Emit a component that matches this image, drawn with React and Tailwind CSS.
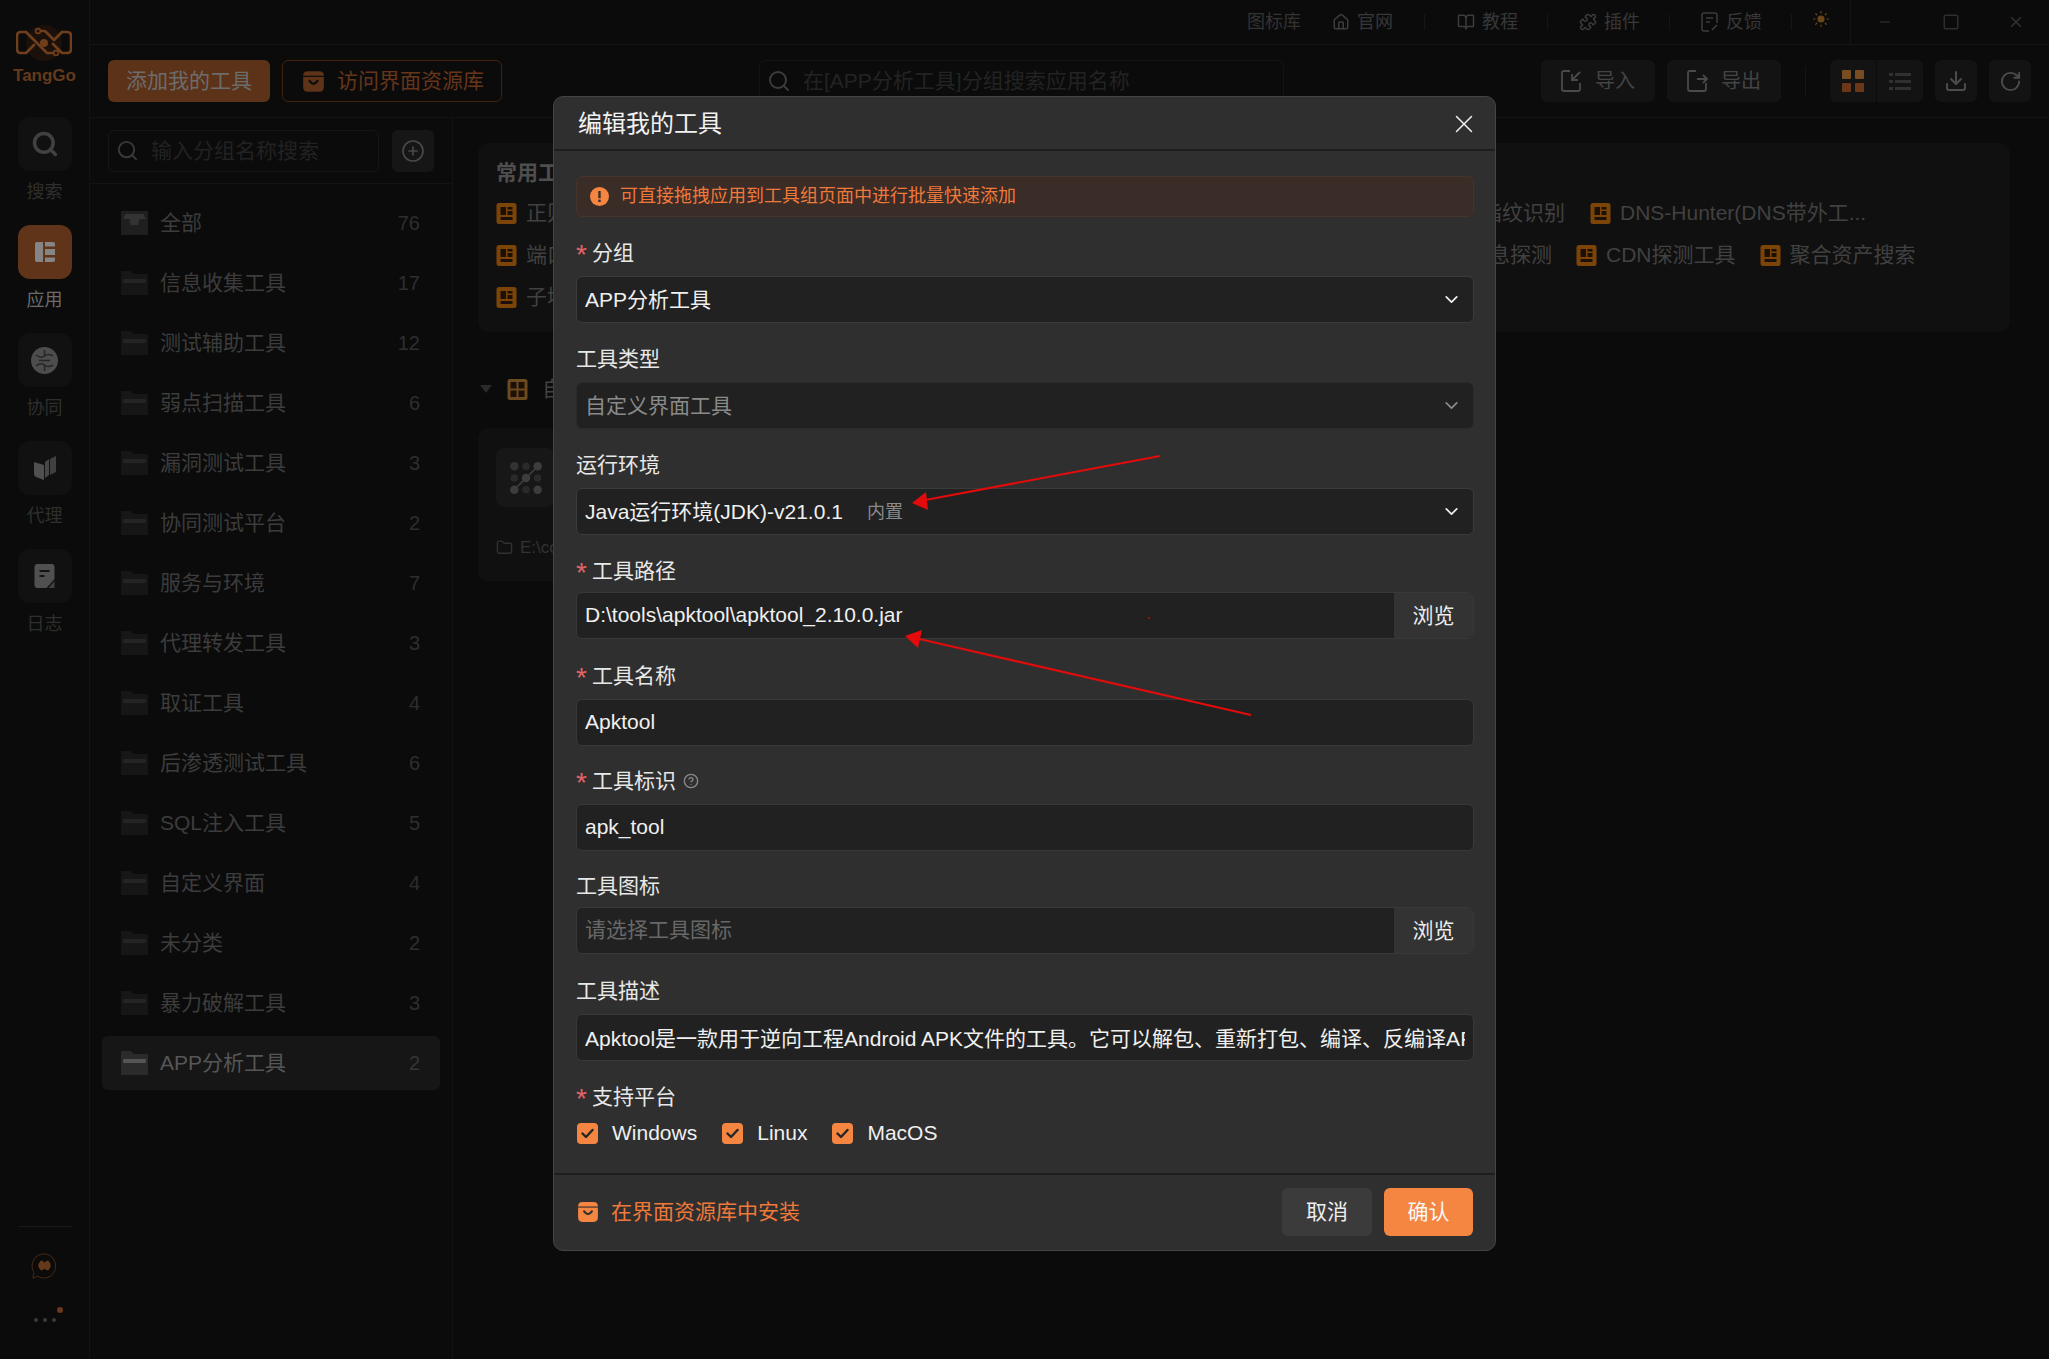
import React from "react";
import { Search, CirclePlus, House, BookOpen, Puzzle, Sun, Download, RotateCw, Folder, ChevronDown, CircleHelp, X, Minus, Square } from "lucide-react";

const FONT = { fontFamily: '"Liberation Sans","Noto Sans CJK SC",sans-serif' };

function Logo() {
  return (
    <svg width="56" height="38" viewBox="0 0 56 38" fill="none">
      <circle cx="28" cy="19" r="18" fill="#1c110a" />
      <g stroke="#6f3e1d" strokeWidth="2.6" strokeLinecap="round" strokeLinejoin="round">
        <path d="M10 8 H5 Q1 8 1 12 V25 Q1 29 5 29 H10 L18 21" />
        <path d="M46 8 H51 Q55 8 55 12 V25 Q55 29 51 29 H46 L37 20" />
        <path d="M10 8 L31 29 H37" />
        <path d="M46 8 L38 16" />
        <path d="M25 7 H29 L37 15" />
      </g>
      <circle cx="28" cy="19" r="4" fill="#6f3e1d" />
      <circle cx="22" cy="7" r="2.4" stroke="#6f3e1d" strokeWidth="1.6" />
      <circle cx="40" cy="29" r="2.4" stroke="#6f3e1d" strokeWidth="1.6" />
    </svg>
  );
}

function RailIcon({ kind }) {
  if (kind === "search") return <Search size={28} color="#414141" strokeWidth={3} />;
  if (kind === "app")
    return (
      <svg width="22" height="22" viewBox="0 0 22 22" fill="#858585">
        <path d="M3 1 H9 V21 H3 Q1 21 1 19 V3 Q1 1 3 1 Z" />
        <path d="M11 1 H19 Q21 1 21 3 V5.5 H11 Z M11 8 H21 V14 H11 Z M11 16.5 H21 V19 Q21 21 19 21 H11 Z" />
      </svg>
    );
  if (kind === "collab")
    return (
      <svg width="27" height="27" viewBox="0 0 27 27" fill="none">
        <circle cx="13.5" cy="13.5" r="13.5" fill="#4d4d4d" />
        <path d="M13.5 3 V10 M13.5 17 V24 M5 8 Q10 12 13.5 9 Q17 6 22 9 M5 19 Q10 15 13.5 18 Q17 21 22 18 M8 13.5 H19" stroke="#262626" strokeWidth="1.5" />
      </svg>
    );
  if (kind === "proxy")
    return (
      <svg width="22" height="24" viewBox="0 0 22 24" fill="#505050">
        <path d="M0 6 L10 9 V24 L2 21 Q0 20 0 18 Z" />
        <path d="M11 6 L15 3 V19 L11 22 Z" fill="#484848" />
        <path d="M16 3 L22 0 V16 L16 19 Z" fill="#404040" />
      </svg>
    );
  return (
    <svg width="21" height="24" viewBox="0 0 20 24">
      <path d="M3 0 H17 Q20 0 20 3 V15 L12 24 H3 Q0 24 0 21 V3 Q0 0 3 0 Z" fill="#505050" />
      <path d="M5 6 H15 V8 H5 Z M5 11 H10 V13 H5 Z" fill="#141414" />
      <path d="M20 17 V24 H14 Z" fill="#404040" />
    </svg>
  );
}

function RailItem({ kind, label, active }) {
  return (
    <div className="flex flex-col items-center mb-[21px]">
      <div className={`w-[54px] h-[54px] rounded-[12px] flex items-center justify-center ${active ? "bg-[#5f3418]" : "bg-[#111111]"}`}>
        <RailIcon kind={kind} />
      </div>
      <div className={`mt-[9px] h-[24px] leading-[24px] text-[18px] ${active ? "text-[#6b6b6b]" : "text-[#2f2f2f]"}`}>{label}</div>
    </div>
  );
}

function Rail() {
  return (
    <div className="w-[90px] shrink-0 h-full border-r border-[#131313] bg-[#0b0b0b] flex flex-col items-center">
      <div className="h-[117px] shrink-0 pt-[24px] flex flex-col items-center">
        <Logo />
        <div className="text-[17px] leading-[24px] mt-[2px] font-bold text-[#653a1c]">TangGo</div>
      </div>
      <RailItem kind="search" label="搜索" />
      <RailItem kind="app" label="应用" active />
      <RailItem kind="collab" label="协同" />
      <RailItem kind="proxy" label="代理" />
      <RailItem kind="log" label="日志" />
      <div className="mt-auto h-[133px] shrink-0 w-[54px] border-t border-[#181818] flex flex-col items-center pt-[26px]">
        <svg width="27" height="27" viewBox="0 0 26 28" fill="none">
          <path d="M13 1 A12 12.5 0 1 1 6 24 L1 26 L2 20 A12 12.5 0 0 1 13 1 Z" stroke="#4d2a14" strokeWidth="1" />
          <path d="M7 11 L9 8 H11 L13 10 L15 8 H17 L19 11 Q20 13 19 15 L17 18 H15 L13 16 L11 18 H9 L7 15 Q6 13 7 11 Z" fill="#653a1a" />
        </svg>
        <div className="relative mt-[38px] flex gap-[5px]">
          <span className="w-[4px] h-[4px] rounded-full bg-[#3a3a3a]" />
          <span className="w-[4px] h-[4px] rounded-full bg-[#3a3a3a]" />
          <span className="w-[4px] h-[4px] rounded-full bg-[#3a3a3a]" />
          <span className="absolute -top-[11px] -right-[7px] w-[6px] h-[6px] rounded-full bg-[#6a3a1c]" />
        </div>
      </div>
    </div>
  );
}

function NavDivider({ className }) {
  return <span className={`w-px h-[16px] bg-[#161616] ${className || "ml-[29px]"}`} />;
}

function NavItem({ icon, text, className }) {
  return (
    <div className={`flex items-center gap-[7px] ${className || "ml-[31px]"}`}>
      {icon}
      <span className="text-[18px] text-[#383838]">{text}</span>
    </div>
  );
}

function TopBar() {
  const c = "#3c3c3c";
  return (
    <div className="h-[45px] shrink-0 border-b border-[#141414] flex items-center justify-end">
      <span className="text-[18px] text-[#333333]">图标库</span>
      <NavItem icon={<House size={18} color={c} />} text="官网" />
      <NavDivider className="ml-[31px]" />
      <NavItem icon={<BookOpen size={18} color={c} />} text="教程" className="ml-[32px]" />
      <NavDivider />
      <NavItem icon={<Puzzle size={18} color={c} />} text="插件" />
      <NavDivider />
      <NavItem
        icon={
          <svg width="18" height="20" viewBox="0 0 18 20" fill="none" stroke={c} strokeWidth="1.5">
            <path d="M8 19 H3 Q1 19 1 17 V3 Q1 1 3 1 H14 Q16 1 16 3 V11 M5 6 H12 M5 10 H9 M16 13 L11 18" />
          </svg>
        }
        text="反馈"
      />
      <NavDivider />
      <div className="ml-[20px] w-[18px] h-[28px] pb-[6px] flex items-center justify-center">
        <Sun size={22} color="#6b461b" fill="#6b461b" strokeWidth={1.6} />
      </div>
      <div className="ml-[20px] h-full w-[199px] border-l border-[#141414] flex items-center pl-[26px]">
        <Minus size={16} color="#2a2a2a" />
        <Square size={18} color="#2e2e2e" strokeWidth={2} className="ml-[49px]" />
        <X size={18} color="#303030" className="ml-[47px]" />
      </div>
    </div>
  );
}

function BagIcon({ size, color, smile }) {
  return (
    <svg width={size} height={size} viewBox="0 0 20 20">
      <path d="M5 1 H15 Q19 1 19 5 V15 Q19 19 15 19 H5 Q1 19 1 15 V5 Q1 1 5 1 Z" fill={color} />
      <path d="M1 5.5 H19" stroke={smile} strokeWidth="1" />
      <path d="M6.5 9.5 Q10 14.5 13.5 9.5" stroke={smile} strokeWidth="2" fill="none" strokeLinecap="round" />
    </svg>
  );
}

function GhostBtn({ icon, text }) {
  return (
    <div className="w-[114px] h-[42px] rounded-[6px] bg-[#131313] flex items-center justify-center gap-[12px] text-[20px] text-[#444444]">
      {icon}
      <span>{text}</span>
    </div>
  );
}

function Toolbar() {
  const c = "#4a4a4a";
  return (
    <div className="h-[73px] shrink-0 border-b border-[#131313] flex items-center pl-[18px] pr-[18px]">
      <div className="w-[162px] h-[42px] rounded-[6px] bg-[#5c3318] text-[#6c6c6c] text-[21px] flex items-center justify-center">添加我的工具</div>
      <div className="ml-[12px] w-[220px] h-[42px] rounded-[6px] border border-[#40220f] text-[#66351a] text-[21px] flex items-center pl-[19px] gap-[12px]">
        <BagIcon size={23} color="#5e3317" smile="#0b0b0b" />
        <span>访问界面资源库</span>
      </div>
      <div className="ml-[257px] w-[525px] h-[42px] rounded-[6px] border border-[#141414] flex items-center pl-[7px] gap-[12px]">
        <Search size={24} color="#3c3c3c" strokeWidth={2} />
        <span className="text-[21px] text-[#232323]">在[APP分析工具]分组搜索应用名称</span>
      </div>
      <div className="ml-auto flex items-center">
        <GhostBtn
          text="导入"
          icon={
            <svg width="22" height="22" viewBox="0 0 22 22" fill="none" stroke={c} strokeWidth="1.8">
              <path d="M9 1 H3 Q1 1 1 3 V19 Q1 21 3 21 H17 Q19 21 19 19 V13 M19 2 L11 10 M11 4 V10 H17" />
            </svg>
          }
        />
        <div className="ml-[12px]">
          <GhostBtn
            text="导出"
            icon={
              <svg width="22" height="22" viewBox="0 0 22 22" fill="none" stroke={c} strokeWidth="1.8">
                <path d="M9 1 H3 Q1 1 1 3 V19 Q1 21 3 21 H17 Q19 21 19 19 V13 M10 9 H20 M16 5 L20 9 L16 13" />
              </svg>
            }
          />
        </div>
        <span className="ml-[24px] w-px h-[30px] bg-[#161616]" />
        <div className="ml-[24px] w-[93px] h-[42px] rounded-[6px] bg-[#131313] flex">
          <div className="w-[47px] h-full border-r border-[#0b0b0b] flex items-center justify-center">
            <div className="grid grid-cols-2 gap-[4px]">
              <span className="w-[9px] h-[9px] rounded-[1px] bg-[#7a4c22]" />
              <span className="w-[9px] h-[9px] rounded-[1px] bg-[#7a4c22]" />
              <span className="w-[9px] h-[9px] rounded-[1px] bg-[#6a3719]" />
              <span className="w-[9px] h-[9px] rounded-[1px] bg-[#6a3719]" />
            </div>
          </div>
          <div className="flex-1 flex flex-col items-center justify-center gap-[4px]">
            <span className="flex gap-[2px]"><i className="w-[4px] h-[3px] bg-[#303030]" /><i className="w-[16px] h-[3px] bg-[#303030]" /></span>
            <span className="flex gap-[2px]"><i className="w-[4px] h-[3px] bg-[#303030]" /><i className="w-[16px] h-[3px] bg-[#303030]" /></span>
            <span className="flex gap-[2px]"><i className="w-[4px] h-[3px] bg-[#303030]" /><i className="w-[16px] h-[3px] bg-[#303030]" /></span>
          </div>
        </div>
        <div className="ml-[12px] w-[42px] h-[42px] rounded-[6px] bg-[#131313] flex items-center justify-center"><Download size={24} color="#4c4c4c" /></div>
        <div className="ml-[12px] w-[42px] h-[42px] rounded-[6px] bg-[#131313] flex items-center justify-center"><RotateCw size={23} color="#4c4c4c" /></div>
      </div>
    </div>
  );
}

function FolderIcon({ active, inbox }) {
  const body = active ? "#2b2b2b" : "#161616";
  const stripe = active ? "#555555" : "#242424";
  return (
    <svg width="27" height="24" viewBox="0 0 25 24" preserveAspectRatio="none" className="shrink-0">
      {inbox ? (
        <>
          <rect x="0" y="0" width="25" height="24" rx="1" fill="#1f1f1f" />
          <path d="M2 8 H8 L9 14 H16 L17 8 H23 L21 3 H4 Z" fill="#333333" />
        </>
      ) : (
        <>
          <path d="M0 1 Q0 0 1 0 H9 L12 3 H24 Q25 3 25 4 V23 Q25 24 24 24 H1 Q0 24 0 23 Z" fill={body} />
          <rect x="2" y="8" width="21" height="4" fill={stripe} />
        </>
      )}
    </svg>
  );
}

const GROUPS = [
  ["全部", 76], ["信息收集工具", 17], ["测试辅助工具", 12], ["弱点扫描工具", 6], ["漏洞测试工具", 3],
  ["协同测试平台", 2], ["服务与环境", 7], ["代理转发工具", 3], ["取证工具", 4], ["后渗透测试工具", 6],
  ["SQL注入工具", 5], ["自定义界面", 4], ["未分类", 2], ["暴力破解工具", 3], ["APP分析工具", 2],
];

function GroupPanel() {
  return (
    <div className="w-[363px] shrink-0 border-r border-[#131313] h-full">
      <div className="h-[66px] border-b border-[#131313] flex items-center pl-[18px]">
        <div className="w-[271px] h-[42px] rounded-[6px] border border-[#161616] flex items-center pl-[7px] gap-[12px]">
          <Search size={23} color="#3a3a3a" />
          <span className="text-[21px] text-[#222222]">输入分组名称搜索</span>
        </div>
        <div className="ml-[13px] w-[42px] h-[42px] rounded-[6px] bg-[#161616] flex items-center justify-center">
          <CirclePlus size={24} color="#4a4a4a" strokeWidth={1.6} />
        </div>
      </div>
      <div className="pt-[12px] pl-[12px] w-[350px]">
        {GROUPS.map(([name, n], i) => {
          const active = i === GROUPS.length - 1;
          return (
            <div key={name} className={`h-[54px] mb-[6px] rounded-[6px] flex items-center pl-[19px] pr-[20px] ${active ? "bg-[#161616]" : ""}`}>
              <FolderIcon active={active} inbox={i === 0} />
              <span className={`ml-[12px] text-[21px] ${active ? "text-[#565656]" : "text-[#3c3c3c]"}`}>{name}</span>
              <span className={`ml-auto text-[20px] ${active ? "text-[#353535]" : "text-[#2e2e2e]"}`}>{n}</span>
            </div>
          );
        })}
      </div>
    </div>
  );
}

function ToolIcon() {
  return (
    <svg width="21" height="21" viewBox="0 0 20 21" className="shrink-0">
      <rect width="20" height="21" rx="2.5" fill="#7c4407" />
      <path d="M4 4 H9.5 V12 H4 Z M11 4 H16 V6.5 H11 Z M11 8 H16 V12 H11 Z M4 14 H16 V17 H4 Z" fill="#1c1009" />
    </svg>
  );
}

function Tool({ text }) {
  return (
    <div className="flex items-center gap-[9px]">
      <ToolIcon />
      <span className="text-[21px] text-[#414141] whitespace-nowrap">{text}</span>
    </div>
  );
}

function Content() {
  return (
    <div className="flex-1 min-w-0 pl-[25px] pr-[39px] pt-[25px]">
      <div className="h-[189px] rounded-[10px] bg-[#101010] pl-[18px] pt-[16px]">
        <div className="text-[21px] font-bold leading-[28px] text-[#4e4e4e]">常用工具</div>
        <div className="mt-[5px] h-[42px] flex items-center">
          <div className="w-[1069px] flex items-center justify-between">
            <Tool text="正则表达式" />
            <span className="text-[21px] text-[#414141]">指纹识别</span>
          </div>
          <div className="ml-[25px]"><Tool text="DNS-Hunter(DNS带外工..." /></div>
        </div>
        <div className="h-[42px] flex items-center">
          <div className="w-[1056px] flex items-center justify-between">
            <Tool text="端口扫描" />
            <span className="text-[21px] text-[#414141]">信息探测</span>
          </div>
          <div className="ml-[24px]"><Tool text="CDN探测工具" /></div>
          <div className="ml-[24px]"><Tool text="聚合资产搜索" /></div>
        </div>
        <div className="h-[42px] flex items-center"><Tool text="子域名" /></div>
      </div>
      <div className="mt-[45px] h-[24px] flex items-center pl-[2px]">
        <span className="w-0 h-0 border-l-[6px] border-r-[6px] border-t-[8px] border-l-transparent border-r-transparent border-t-[#2a2a2a]" />
        <svg width="21" height="21" viewBox="0 0 20 21" className="ml-[15px]">
          <rect width="20" height="21" rx="2.5" fill="#6b4a1e" />
          <path d="M3 3 H9 V9.5 H3 Z M11 3 H17 V9.5 H11 Z M3 11.5 H9 V18 H3 Z M11 11.5 H17 V18 H11 Z" fill="#1c1009" />
        </svg>
        <span className="ml-[14px] text-[21px] leading-[24px] text-[#414141]">自定义</span>
      </div>
      <div className="mt-[27px] w-[500px] h-[153px] rounded-[10px] bg-[#101010] pl-[18px] pt-[20px]">
        <div className="w-[59px] h-[59px] rounded-[8px] bg-[#171717] flex items-center justify-center">
          <svg width="34" height="34" viewBox="0 0 32 32" fill="#3d3d3d">
            <circle cx="5" cy="5" r="4" fill="#333" /><circle cx="16" cy="5" r="3.5" fill="#2a2a2a" /><circle cx="27" cy="5" r="4" />
            <circle cx="5" cy="16" r="3.5" fill="#2a2a2a" /><circle cx="16" cy="16" r="4" /><circle cx="27" cy="16" r="3.5" fill="#2a2a2a" />
            <circle cx="5" cy="27" r="4" /><circle cx="16" cy="27" r="3.5" fill="#2a2a2a" /><circle cx="27" cy="27" r="4" />
            <path d="M5 27 L27 5" stroke="#3d3d3d" strokeWidth="1.5" />
          </svg>
        </div>
        <div className="mt-[28px] flex items-center gap-[7px]">
          <Folder size={17} color="#303030" />
          <span className="text-[17px] text-[#333333]">E:\code</span>
        </div>
      </div>
    </div>
  );
}

function Label({ text, required, help }) {
  return (
    <div className="h-[24px] flex items-center text-[21px] leading-[24px] text-[#e8e8e8]">
      {required && <span className="w-[16px] pt-[4px] text-[28px] leading-[24px] text-[#e2646a]">*</span>}
      <span>{text}</span>
      {help && <CircleHelp size={16} color="#8a8a8a" className="ml-[7px]" />}
    </div>
  );
}

function SelectBox({ disabled, children }) {
  return (
    <div className={`h-[47px] rounded-[6px] bg-[#212121] border flex items-center pl-[8px] pr-[11px] text-[21px] leading-[24px] ${disabled ? "text-[#8a8a8a] border-[#2b2b2b]" : "text-[#f0f0f0] border-[#3b3b3b]"}`}>
      <div className="flex-1 flex items-center min-w-0">{children}</div>
      <ChevronDown size={21} color={disabled ? "#8a8a8a" : "#eeeeee"} strokeWidth={2} />
    </div>
  );
}

function InputBox({ value, placeholder, browse }) {
  return (
    <div className="h-[47px] rounded-[6px] bg-[#212121] border border-[#383838] flex overflow-hidden">
      <input
        readOnly
        value={value || ""}
        placeholder={placeholder}
        className="flex-1 min-w-0 h-full bg-transparent pl-[8px] pr-[8px] pb-[2px] text-[21px] text-[#f0f0f0] placeholder:text-[#686868] outline-none"
      />
      {browse && <div className="w-[79px] shrink-0 bg-[#333333] flex items-center justify-center text-[21px] leading-[24px] text-[#ececec]">浏览</div>}
    </div>
  );
}

function Check({ label, className }) {
  return (
    <div className={`flex items-center gap-[14px] ${className || ""}`}>
      <span className="w-[21px] h-[21px] rounded-[4px] bg-[#f58642] flex items-center justify-center">
        <svg width="13" height="11" viewBox="0 0 13 11" fill="none" stroke="#262626" strokeWidth="2.4" strokeLinecap="round" strokeLinejoin="round">
          <path d="M1.5 5.5 L5 9 L11.5 2" />
        </svg>
      </span>
      <span className="text-[21px] leading-[24px] text-[#f0f0f0]">{label}</span>
    </div>
  );
}

function Modal() {
  return (
    <div className="absolute left-[553px] top-[96px] w-[943px] h-[1155px] rounded-[10px] bg-[#2f2f2f] border border-[#444444] flex flex-col">
      <div className="h-[54px] shrink-0 pl-[24px] pr-[16px] pt-[2px] flex items-center justify-between border-b-2 border-[#1e1e1e]">
        <span className="text-[24px] leading-[32px] text-[#f2f2f2]">编辑我的工具</span>
        <X size={30} color="#eeeeee" strokeWidth={1.2} />
      </div>
      <div className="flex-1 pl-[22px] pr-[21px]">
        <div className="mt-[25px] h-[41px] rounded-[6px] bg-[#3a2c27] border border-[#46332b] flex items-center pl-[13px] gap-[11px]">
          <svg width="19" height="19" viewBox="0 0 19 19">
            <circle cx="9.5" cy="9.5" r="9.5" fill="#f58642" />
            <rect x="8.3" y="4" width="2.4" height="7.2" fill="#3a2c27" />
            <rect x="8.3" y="12.6" width="2.4" height="2.4" fill="#3a2c27" />
          </svg>
          <span className="text-[18px] text-[#f0793a]">可直接拖拽应用到工具组页面中进行批量快速添加</span>
        </div>
        <div className="mt-[24px]"><Label text="分组" required /></div>
        <div className="mt-[11px]"><SelectBox>APP分析工具</SelectBox></div>
        <div className="mt-[24px]"><Label text="工具类型" /></div>
        <div className="mt-[11px]"><SelectBox disabled>自定义界面工具</SelectBox></div>
        <div className="mt-[24px]"><Label text="运行环境" /></div>
        <div className="mt-[11px]">
          <SelectBox>
            Java运行环境(JDK)-v21.0.1
            <span className="ml-[24px] text-[18px] text-[#8a8a8a]">内置</span>
          </SelectBox>
        </div>
        <div className="mt-[24px]"><Label text="工具路径" required /></div>
        <div className="mt-[9px]"><InputBox value="D:\tools\apktool\apktool_2.10.0.jar" browse /></div>
        <div className="mt-[25px]"><Label text="工具名称" required /></div>
        <div className="mt-[11px]"><InputBox value="Apktool" /></div>
        <div className="mt-[23px]"><Label text="工具标识" required help /></div>
        <div className="mt-[11px]"><InputBox value="apk_tool" /></div>
        <div className="mt-[23px]"><Label text="工具图标" /></div>
        <div className="mt-[9px]"><InputBox placeholder="请选择工具图标" browse /></div>
        <div className="mt-[25px]"><Label text="工具描述" /></div>
        <div className="mt-[11px]"><InputBox value="Apktool是一款用于逆向工程Android APK文件的工具。它可以解包、重新打包、编译、反编译APK文件等操作" /></div>
        <div className="mt-[24px]"><Label text="支持平台" required /></div>
        <div className="mt-[12px] pl-[1px] flex">
          <Check label="Windows" />
          <Check label="Linux" className="ml-[25px]" />
          <Check label="MacOS" className="ml-[25px]" />
        </div>
      </div>
      <div className="h-[77px] shrink-0 border-t-2 border-[#1e1e1e] pl-[23px] pr-[22px] pb-[2px] flex items-center">
        <BagIcon size={22} color="#f58642" smile="#2f2f2f" />
        <span className="ml-[12px] text-[21px] leading-[24px] text-[#f0793a]">在界面资源库中安装</span>
        <div className="ml-auto w-[90px] h-[48px] rounded-[6px] bg-[#3b3b3b] flex items-center justify-center text-[21px] leading-[24px] text-[#eeeeee]">取消</div>
        <div className="ml-[12px] w-[89px] h-[48px] rounded-[6px] bg-[#f58642] flex items-center justify-center text-[21px] leading-[24px] text-[#f8f8f8]">确认</div>
      </div>
    </div>
  );
}

function Annotations() {
  return (
    <svg className="absolute left-0 top-0 pointer-events-none" width="2049" height="1359" viewBox="0 0 2049 1359">
      <path d="M1160 456 L920 501" stroke="#e30b0b" strokeWidth="2" />
      <path d="M912 503 L926 492 L928 510 Z" fill="#e30b0b" />
      <path d="M1251 715 L915 638" stroke="#e30b0b" strokeWidth="2" />
      <path d="M905 636 L922 630 L918 648 Z" fill="#e30b0b" />
      <circle cx="1149" cy="618" r="1" fill="#b51212" />
    </svg>
  );
}

export default function App() {
  return (
    <div className="relative w-[2049px] h-[1359px] overflow-hidden bg-[#0b0b0b] flex" style={FONT}>
      <Rail />
      <div className="flex-1 min-w-0 flex flex-col">
        <TopBar />
        <Toolbar />
        <div className="flex-1 flex min-h-0">
          <GroupPanel />
          <Content />
        </div>
      </div>
      <Modal />
      <Annotations />
    </div>
  );
}
